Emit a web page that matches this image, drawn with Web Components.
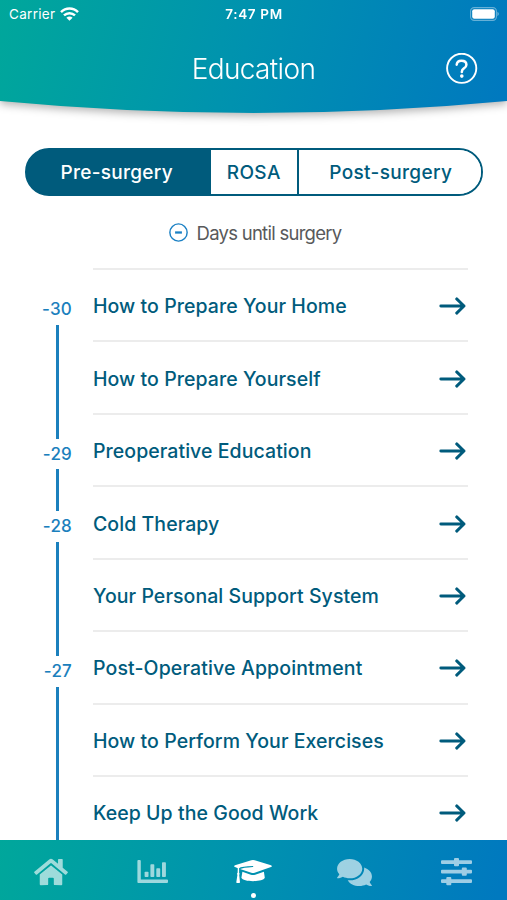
<!DOCTYPE html>
<html lang="en">
<head>
<meta charset="utf-8">
<title>Education</title>
<style>
  body {
    background: #ffffff;
    font-family: Inter, 'Liberation Sans', sans-serif;
    margin: 0;
    --brand: linear-gradient( 104deg, #00a79b 0%, #0092af 48%, #0079bf 98% );
    --ink: #005b7c;
    --accent: #1b80bd;
  }
</style>
</head>
<body>

<edu-app>
  <edu-header slot="header" label="Education"></edu-header>
  <edu-segments slot="filter">
    <edu-segment style="width: 183.5px; padding-right: 4px; letter-spacing: 0.28px" selected>Pre-surgery</edu-segment>
    <edu-segment style="width: 88.5px; letter-spacing: 0.4px">ROSA</edu-segment>
    <edu-segment style="flex: 1; padding-left: 2px; letter-spacing: 0.35px">Post-surgery</edu-segment>
  </edu-segments>
  <edu-legend slot="legend">Days until surgery</edu-legend>
  <edu-day day="-30">
    <edu-lesson>How to Prepare Your Home</edu-lesson>
    <edu-lesson>How to Prepare Yourself</edu-lesson>
  </edu-day>
  <edu-day day="-29">
    <edu-lesson>Preoperative Education</edu-lesson>
  </edu-day>
  <edu-day day="-28">
    <edu-lesson>Cold Therapy</edu-lesson>
    <edu-lesson>Your Personal Support System</edu-lesson>
  </edu-day>
  <edu-day day="-27">
    <edu-lesson style="letter-spacing: 0.13px">Post-Operative Appointment</edu-lesson>
    <edu-lesson>How to Perform Your Exercises</edu-lesson>
    <edu-lesson>Keep Up the Good Work</edu-lesson>
  </edu-day>
  <edu-tabs slot="tabs"></edu-tabs>
</edu-app>

<script>
class EduElement extends HTMLElement {
  constructor( markup ) {
    super();

    const template = document.createElement( 'template' );
    template.innerHTML = markup;

    this.attachShadow( {mode: 'open'} );
    this.shadowRoot.appendChild( template.content.cloneNode( true ) );
  }
}

class EduApp extends EduElement {
  constructor() {
    super( /* template */ `
      <style>
        :host {
          display: flex;
          flex-direction: column;
          height: 900px;
          overflow: hidden;
          width: 507px;
        }

        main {
          flex: 1;
          min-height: 0;
          overflow: hidden;
        }
      </style>
      <slot name="header"></slot>
      <slot name="filter"></slot>
      <slot name="legend"></slot>
      <main><slot></slot></main>
      <slot name="tabs"></slot>
    ` );
  }
}

class EduHeader extends EduElement {
  constructor() {
    super( /* template */ `
      <style>
        :host {
          color: #ffffff;
          display: block;
          filter: drop-shadow( 0 3px 4px rgba( 0, 0, 0, 0.3 ) );
          flex: none;
        }

        header {
          background: var( --brand );
          clip-path: path( 'M0 0H507V101Q253.5 125 0 101Z' );
          height: 113px;
        }

        .status, .title {
          align-items: center;
          display: grid;
          grid-template-columns: 1fr auto 1fr;
        }

        .status {
          font-size: 13.5px;
          height: 27px;
          padding: 0 8px 0 9px;
        }

        .carrier {
          align-items: center;
          display: flex;
          gap: 5px;
          letter-spacing: 0.3px;
        }

        .time {
          font-weight: 600;
          font-size: 13.5px;
          letter-spacing: 0.65px;
        }

        .battery, .help {
          justify-self: end;
        }

        .title {
          height: 83px;
          padding: 0 29px;
        }

        h1 {
          font-size: 28px;
          font-weight: 350;
          grid-column: 2;
          letter-spacing: -0.65px;
          margin: 0;
        }

        svg {
          display: block;
        }
      </style>
      <header>
        <div class="status">
          <div class="carrier">
            <span>Carrier</span>
            <svg width="19" height="14" viewBox="0 0 19 14" fill="none" stroke="#ffffff" stroke-width="2.5">
              <path d="M1 5.2C5.8 .4 13.2 .4 18 5.2"/>
              <path d="M4 8.4C7.1 5.4 11.9 5.4 15 8.4"/>
              <path d="M6.4 10.7C8.2 9.1 10.8 9.1 12.6 10.7L9.5 13.8Z" fill="#ffffff" stroke="none"/>
            </svg>
          </div>
          <span class="time">7:47 PM</span>
          <svg class="battery" width="29" height="14" viewBox="0 0 29 14">
            <rect x=".6" y=".6" width="25.8" height="12.8" rx="3.6" fill="none" stroke="#ffffff" stroke-opacity=".4" stroke-width="1.1"/>
            <rect x="2.2" y="2.2" width="22.6" height="9.6" rx="2.1" fill="#ffffff"/>
            <path d="M27.5 4.8Q30 7 27.5 9.2Z" fill="#ffffff" fill-opacity=".5"/>
          </svg>
        </div>
        <div class="title">
          <h1></h1>
          <svg class="help" width="32" height="32" viewBox="0 0 32 32" fill="none" stroke="#ffffff">
            <circle cx="15.7" cy="15.3" r="14.6" stroke-width="1.9"/>
            <path d="M10.7 11.7C10.9 9.1 12.7 7.7 15.4 7.7C18.4 7.7 20.4 9.3 20.4 11.7C20.4 13.5 19.4 14.5 17.9 15.4C16.4 16.3 15.8 17 15.8 18.9" stroke-width="2.5" stroke-linecap="round"/>
            <circle cx="15.8" cy="23.1" r="1.8" fill="#ffffff" stroke="none"/>
          </svg>
        </div>
      </header>
    ` );
  }

  connectedCallback() {
    this.shadowRoot.querySelector( 'h1' ).textContent = this.getAttribute( 'label' );
  }
}

class EduSegments extends EduElement {
  constructor() {
    super( /* template */ `
      <style>
        :host {
          background: linear-gradient( 90deg, var( --ink ) 50%, transparent 50% );
          border: 2.5px solid var( --ink );
          border-radius: 24px;
          box-sizing: border-box;
          display: flex;
          flex: none;
          height: 48px;
          margin: 35px 24.5px 0 25px;
          overflow: hidden;
        }
      </style>
      <slot></slot>
    ` );
  }
}

class EduSegment extends EduElement {
  constructor() {
    super( /* template */ `
      <style>
        :host {
          align-items: center;
          background: #ffffff;
          border-right: 2.5px solid var( --ink );
          box-sizing: border-box;
          color: var( --ink );
          display: flex;
          font-size: 19px;
          font-weight: 500;
          justify-content: center;
        }

        :host( [selected] ) {
          background: var( --ink );
          border-right: none;
          color: #ffffff;
        }

        :host( :last-child ) {
          border-right: none;
        }
      </style>
      <slot></slot>
    ` );
  }
}

class EduLegend extends EduElement {
  constructor() {
    super( /* template */ `
      <style>
        :host {
          align-items: center;
          box-sizing: border-box;
          color: #58595b;
          display: flex;
          flex: none;
          font-size: 18.5px;
          gap: 9px;
          height: 72px;
          justify-content: center;
          letter-spacing: -0.73px;
          padding: 1px 0 0 3px;
        }
      </style>
      <svg width="19" height="19" viewBox="0 0 20 20" fill="none" stroke="#1b80c4">
        <circle cx="10" cy="10" r="9.1" stroke-width="1.5"/>
        <path d="M6.4 10H13.6" stroke-width="2.4"/>
      </svg>
      <slot></slot>
    ` );
  }
}

class EduDay extends EduElement {
  constructor() {
    super( /* template */ `
      <style>
        :host {
          display: grid;
          grid-template-columns: 72px 375px;
          column-gap: 21px;
        }

        .rail {
          align-items: flex-end;
          display: flex;
          flex-direction: column;
          margin: 26px 0 -26px;
        }

        .day {
          color: var( --accent );
          font-size: 17px;
          font-weight: 500;
          height: 30.5px;
          letter-spacing: 0.2px;
          line-height: 31.5px;
        }

        .line {
          background: var( --accent );
          flex: 1;
          margin-right: 13.5px;
          width: 2.7px;
        }
      </style>
      <div class="rail">
        <div class="day"></div>
        <div class="line"></div>
      </div>
      <div><slot></slot></div>
    ` );
  }

  connectedCallback() {
    this.shadowRoot.querySelector( '.day' ).textContent = this.getAttribute( 'day' );
  }
}

class EduLesson extends EduElement {
  constructor() {
    super( /* template */ `
      <style>
        :host {
          align-items: center;
          border-top: 2px solid #ececec;
          box-sizing: border-box;
          color: var( --ink );
          display: flex;
          font-size: 19.5px;
          font-weight: 500;
          height: 72.45px;
          justify-content: space-between;
          letter-spacing: 0.06px;
          padding: 2px 2px 0 0;
          white-space: nowrap;
        }
      </style>
      <span><slot></slot></span>
      <svg width="27" height="18" viewBox="0 0 27 18" fill="none" stroke="currentColor" stroke-width="2.9" stroke-linecap="round" stroke-linejoin="round">
        <path d="M1.8 9H25M17.7 1.9L25 9L17.7 16.1"/>
      </svg>
    ` );
  }
}

class EduTabs extends EduElement {
  constructor() {
    super( /* template */ `
      <style>
        :host {
          background: var( --brand );
          display: grid;
          flex: none;
          grid-template-columns: repeat( 5, 1fr );
          height: 60px;
        }

        .tab {
          align-items: center;
          color: #ffffff;
          display: flex;
          flex-direction: column;
          opacity: 0.62;
          padding-top: 16.5px;
        }

        .tab.active {
          opacity: 1;
        }

        .dot {
          background: #ffffff;
          border-radius: 50%;
          height: 5px;
          margin-top: 6px;
          width: 5px;
        }
      </style>
      <div class="tab">
        <svg width="34" height="30" viewBox="0 0 576 512" fill="currentColor"><path d="M280.37 148.26L96 300.11V464a16 16 0 0 0 16 16l112.06-.29a16 16 0 0 0 15.92-16V368a16 16 0 0 1 16-16h64a16 16 0 0 1 16 16v95.64a16 16 0 0 0 16 16.05L464 480a16 16 0 0 0 16-16V300L295.67 148.26a12.19 12.19 0 0 0-15.3 0zM571.6 251.47L488 182.56V44.05a12 12 0 0 0-12-12h-56a12 12 0 0 0-12 12v72.61L318.47 43a48 48 0 0 0-61 0L4.34 251.47a12 12 0 0 0-1.6 16.9l25.5 31A12 12 0 0 0 45.15 301l235.22-193.74a12.19 12.19 0 0 1 15.3 0L530.9 301a12 12 0 0 0 16.9-1.6l25.5-31a12 12 0 0 0-1.7-16.93z"/></svg>
      </div>
      <div class="tab">
        <svg width="31" height="30" viewBox="0 0 31 30" fill="currentColor">
          <path d="M1.3 3H2.9Q3.8 3 3.8 3.9V22.5H30Q31 22.5 31 23.4V25Q31 26 30 26H1.3Q.4 26 .4 25V3.9Q.4 3 1.3 3Z"/>
          <rect x="7.6" y="14.8" width="3.9" height="5.2" rx=".8"/>
          <rect x="13.4" y="7.2" width="3.9" height="12.8" rx=".8"/>
          <rect x="19.3" y="11.2" width="3.9" height="8.8" rx=".8"/>
          <rect x="25" y="5.2" width="3.9" height="14.8" rx=".8"/>
        </svg>
      </div>
      <div class="tab active">
        <svg width="38" height="30" viewBox="0 0 38 30" fill="currentColor">
          <path d="M17.3 3.3Q19 2.8 20.7 3.3L37 8.3Q38.7 9.1 37 10L20.7 15.8Q19 16.4 17.3 15.8L6 12Q9 10.7 18.8 10Q19.7 9.8 19 9.1Q8 9.3 4.5 11.4L1 10Q-.7 9.1 1 8.3Z"/>
          <path d="M8.4 14.8L16.8 17.7Q19 18.4 21.2 17.7L29.9 14.8L30.8 20.8C29 25.3 9 25.3 7.4 20.8Z"/>
          <path d="M3.8 11H5.1V15.7Q6.1 16.7 5.2 17.9L6 25.2Q6 26 5.2 26H3Q2.2 26 2.3 25.2L3.4 17.9Q2.5 16.7 3.6 15.7Z"/>
        </svg>
        <div class="dot"></div>
      </div>
      <div class="tab">
        <svg width="35" height="31" viewBox="0 0 576 512" fill="currentColor"><path d="M416 192c0-88.4-93.1-160-208-160S0 103.6 0 192c0 34.3 14.1 65.9 38 92-13.4 30.2-35.5 54.2-35.8 54.5-2.2 2.3-2.8 5.7-1.5 8.7S4.8 352 8 352c36.6 0 66.9-12.3 88.7-25 32.2 15.7 70.3 25 111.3 25 114.9 0 208-71.6 208-160zm122 220c23.9-26 38-57.7 38-92 0-66.9-53.5-124.2-129.3-148.1.9 6.6 1.3 13.3 1.3 20.1 0 105.9-107.7 192-240 192-10.8 0-21.3-.8-31.7-1.9C207.8 439.6 281.8 480 368 480c41 0 79.1-9.2 111.3-25 21.8 12.7 52.1 25 88.7 25 3.2 0 6.1-1.9 7.3-4.8 1.3-2.9.7-6.3-1.5-8.7-.3-.3-22.4-24.2-35.8-54.5z"/></svg>
      </div>
      <div class="tab">
        <svg width="31" height="30" viewBox="0 0 31 30" fill="currentColor">
          <path d="M1 3.2H13V2Q13 1 14 1H17Q18 1 18 2V3.2H30Q31 3.2 31 4.2V6Q31 7 30 7H18V8.2Q18 9.2 17 9.2H14Q13 9.2 13 8.2V7H1Q0 7 0 6V4.2Q0 3.2 1 3.2Z"/>
          <path d="M1 12.7H20.8V11.5Q20.8 10.5 21.8 10.5H24.8Q25.8 10.5 25.8 11.5V12.7H30Q31 12.7 31 13.7V15.5Q31 16.5 30 16.5H25.8V17.7Q25.8 18.7 24.8 18.7H21.8Q20.8 18.7 20.8 17.7V16.5H1Q0 16.5 0 15.5V13.7Q0 12.7 1 12.7Z"/>
          <path d="M1 22.2H5.3V21Q5.3 20 6.3 20H9.3Q10.3 20 10.3 21V22.2H30Q31 22.2 31 23.2V25Q31 26 30 26H10.3V27.2Q10.3 28.2 9.3 28.2H6.3Q5.3 28.2 5.3 27.2V26H1Q0 26 0 25V23.2Q0 22.2 1 22.2Z"/>
        </svg>
      </div>
    ` );
  }
}

window.customElements.define( 'edu-app', EduApp );
window.customElements.define( 'edu-header', EduHeader );
window.customElements.define( 'edu-segments', EduSegments );
window.customElements.define( 'edu-segment', EduSegment );
window.customElements.define( 'edu-legend', EduLegend );
window.customElements.define( 'edu-day', EduDay );
window.customElements.define( 'edu-lesson', EduLesson );
window.customElements.define( 'edu-tabs', EduTabs );
</script>
</body>
</html>
